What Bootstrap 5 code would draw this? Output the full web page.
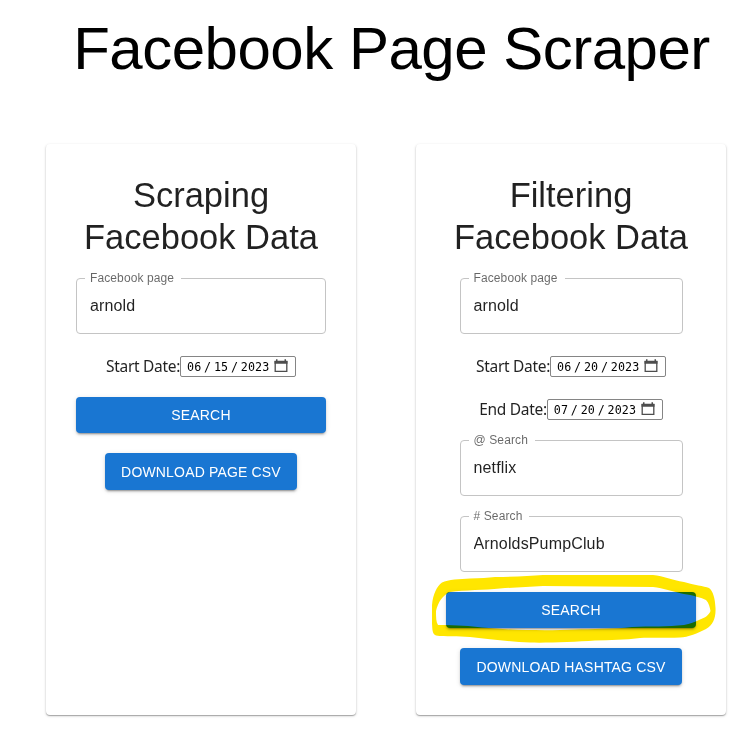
<!DOCTYPE html>
<html lang="en">
<head>
<meta charset="utf-8">
<meta name="viewport" content="width=device-width, initial-scale=1">
<title>Facebook Page Scraper</title>
<link href="https://cdn.jsdelivr.net/npm/bootstrap@5.3.0/dist/css/bootstrap.min.css" rel="stylesheet">
<style>
  body { font-family: "Liberation Sans", Arial, sans-serif; background: #fff; color: rgba(0,0,0,.87); min-height: 100vh; }
  .page-title { font-size: 60px; line-height: 72px; letter-spacing: -.5px; font-weight: 400; color: #000; padding: 13px 0 0 31px; margin-bottom: 59px; }
  .panels { gap: 60px; padding-left: 46px; }
  .panel { width: 310px; height: 571px; padding: 30px; gap: 20px; border: 0; border-radius: 4px;
    box-shadow: 0 1px 1px 0 rgba(0,0,0,.26), 0 1px 3px 0 rgba(0,0,0,.18); }
  .panel-title { font-size: 34.5px; line-height: 42px; letter-spacing: 0; font-weight: 400; height: 84px; }
  .field { width: 223px; height: 61px; margin-top: -5px; padding: 0 8px; border: 1px solid #c4c4c4; border-radius: 4px; }
  .field legend { float: none; width: auto; height: 11px; padding: 0 7px 0 5px; margin: 0; font-size: 12px; line-height: 11px; letter-spacing: .11px; color: rgba(0,0,0,.6); white-space: nowrap; }
  .field input { width: 100%; border: 0; outline: 0; padding: 0 5px; height: 23px; margin-top: 10px; font-size: 16px; letter-spacing: .15px; color: inherit; background: transparent; display: block; }
  .date-row { height: 23px; font: 15.500px/24px "Noto Sans", "Open Sans", sans-serif; letter-spacing: -.3px; white-space: nowrap; }
  .date-box { width: 116px; height: 21px; margin-top: 2px; padding: 0 7px 0 6px; border: 1px solid #858585; border-radius: 2px; font: 11.7px/21px "DejaVu Sans Mono", monospace; letter-spacing: .1px; color: #000; }
  .date-box i { font-style: normal; width: 12.6px; text-align: center; }
  .date-box svg { margin-top: 2px; }
  .btn-act { height: 36px; flex-shrink: 0; padding: 0 16px; border: 0; border-radius: 4px; background: #1976d2; color: #fff; font-size: 14px; line-height: 36px; letter-spacing: .17px;
    box-shadow: 0 3px 1px -2px rgba(0,0,0,.2), 0 2px 2px 0 rgba(0,0,0,.14), 0 1px 5px 0 rgba(0,0,0,.12); }
  .btn-act:hover { background: #1565c0; color: #fff; }
  .btn-save { height: 37px; line-height: 38px; }
  .wide { width: 250px; }
  .marker { left: -15px; top: -18px; mix-blend-mode: multiply; pointer-events: none; }
</style>
</head>
<body>
<h1 class="page-title text-center">Facebook Page Scraper</h1>
<main class="d-flex panels">
  <section class="card panel align-items-center">
    <h2 class="panel-title text-center m-0">Scraping<br>Facebook Data</h2>
    <fieldset class="field wide"><legend>Facebook page</legend><input value="arnold" aria-label="Facebook page"></fieldset>
    <div class="date-row d-flex"><span class="date-label">Start Date:</span>
      <div class="date-box d-flex">06<i>/</i>15<i>/</i>2023
        <svg class="ms-auto" width="14" height="14" viewBox="0 0 14 14"><path d="M1.2 2.5h11.600v9.800H1.200z" fill="none" stroke="#4d4d4d" stroke-width="1.3"/><path d="M.5 2h13v2.800H.5zM2 .3h1.500V3H2zM10.500 .3H12V3h-1.500z" fill="#4d4d4d"/></svg>
      </div>
    </div>
    <button class="btn btn-act wide">SEARCH</button>
    <button class="btn btn-act btn-save">DOWNLOAD PAGE CSV</button>
  </section>
  <section class="card panel align-items-center">
    <h2 class="panel-title text-center m-0">Filtering<br>Facebook Data</h2>
    <fieldset class="field"><legend>Facebook page</legend><input value="arnold" aria-label="Facebook page"></fieldset>
    <div class="date-row d-flex"><span class="date-label">Start Date:</span>
      <div class="date-box d-flex">06<i>/</i>20<i>/</i>2023
        <svg class="ms-auto" width="14" height="14" viewBox="0 0 14 14"><path d="M1.2 2.5h11.600v9.800H1.200z" fill="none" stroke="#4d4d4d" stroke-width="1.3"/><path d="M.5 2h13v2.800H.5zM2 .3h1.500V3H2zM10.500 .3H12V3h-1.500z" fill="#4d4d4d"/></svg>
      </div>
    </div>
    <div class="date-row d-flex"><span class="date-label">End Date:</span>
      <div class="date-box d-flex">07<i>/</i>20<i>/</i>2023
        <svg class="ms-auto" width="14" height="14" viewBox="0 0 14 14"><path d="M1.2 2.5h11.600v9.800H1.200z" fill="none" stroke="#4d4d4d" stroke-width="1.3"/><path d="M.5 2h13v2.800H.5zM2 .3h1.500V3H2zM10.500 .3H12V3h-1.500z" fill="#4d4d4d"/></svg>
      </div>
    </div>
    <fieldset class="field"><legend>@ Search</legend><input value="netflix" aria-label="@ Search"></fieldset>
    <fieldset class="field"><legend># Search</legend><input value="ArnoldsPumpClub" aria-label="# Search"></fieldset>
    <div class="position-relative">
      <button class="btn btn-act wide d-block">SEARCH</button>
      <svg class="marker position-absolute" width="286" height="70" viewBox="431 574 286 70"><path fill="#ffe600" fill-rule="evenodd" d="M432 605C433 594 437 586 442 582.500C448 579.500 460 579 470 578.500Q485 578 495 577C515 577 530 575.500 543 575L653 575C664 576 672 580 684 582C694 585 704 586 709 588C713 591 715 598 715.500 608C716 618 713 625 706 629C698 633 688 637.500 680 637.500C665 638 650 637.500 640 638C625 640 610 640 595 640.500C575 642 545 643 530 642.500C510 642 490 639 470 637C458 636 445 637 436 635.500C432 634 432.500 629 432 624ZM436 611C438 602 443 595 450 592C465 590 485 590 500 588.500Q522 587 543 586L653 587C663 588 675 592 684 594C692 595 702 598 706 600C709 603 710 608 710.500 611C709 615 705 618 700 619.500C695 622 690 624 684 625C668 627 650 626 632 627C615 629 590 629 575 629.500C545 631 510 630 482 627.500C470 626 458 625 438 625C436 622 436 617 436 611Z"/></svg>
    </div>
    <button class="btn btn-act btn-save">DOWNLOAD HASHTAG CSV</button>
  </section>
</main>
<script src="https://cdn.jsdelivr.net/npm/bootstrap@5.3.0/dist/js/bootstrap.bundle.min.js"></script>
</body>
</html>
